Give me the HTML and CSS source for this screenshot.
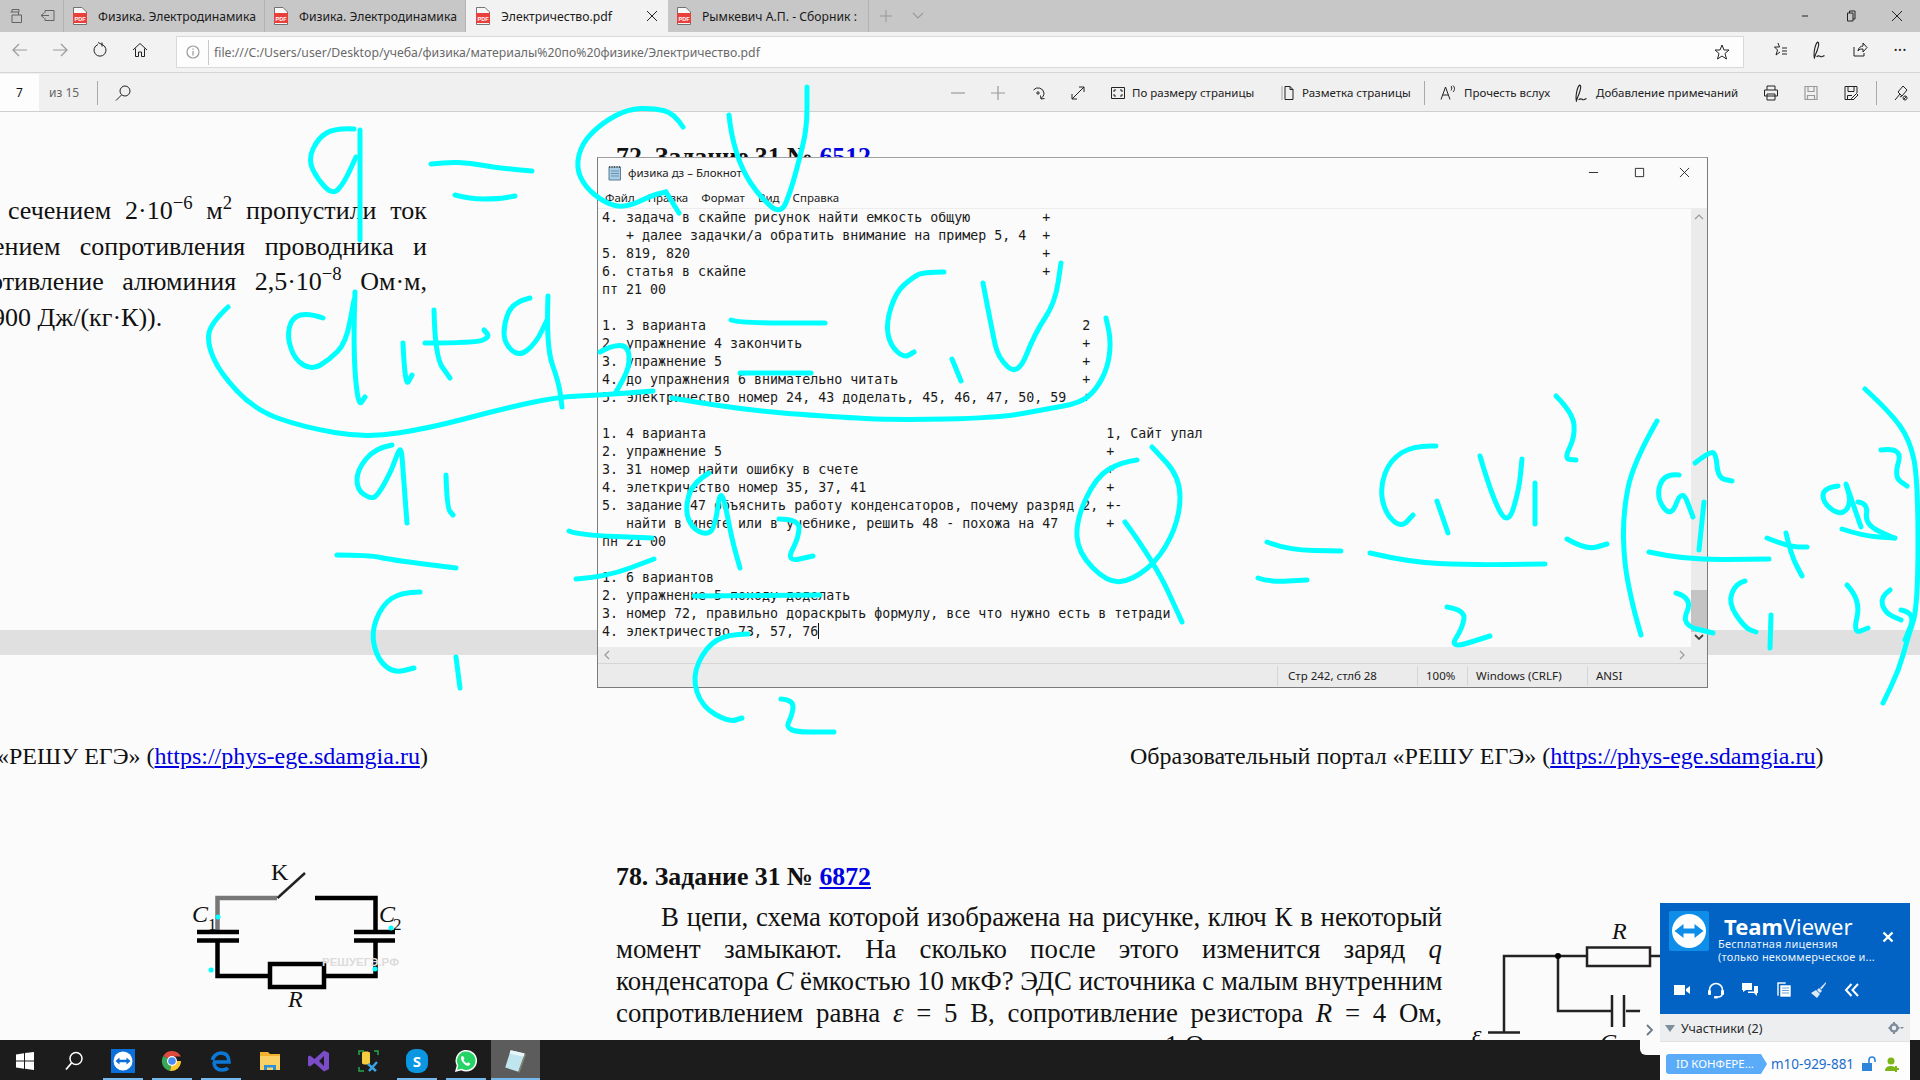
FILE: index.html
```html
<!DOCTYPE html>
<html lang="ru">
<head>
<meta charset="utf-8">
<title>Электричество.pdf</title>
<link rel="stylesheet" href="styles.css">
</head>
<body>
<div class="screen">
  <header class="tabbar">
    <div class="tab-tools">
      <svg class="ic" viewBox="0 0 16 16"><path d="M3 4V1.500h7V4M1.500 4h8v3M3 7h9.500v7.500H3z" class="ln"/></svg>
      <svg class="ic" viewBox="0 0 16 16"><path d="M5 5V2.500h9v10H5V10M1 7.500h8M4 5 1 7.500 4 10" class="ln"/></svg>
    </div>
    <div class="tab"><svg class="pdf" viewBox="0 0 14 18"><path d="M.5.500h8.500l4.500 4.500v12.500H.5z" fill="#f7f7f7" stroke="#555" stroke-width=".8"/><path d="M0 6h14v10H0z" fill="#e8413c"/><text x="7" y="13.500" class="pdf-t">PDF</text></svg><span class="tab-text">Физика. Электродинамика</span></div>
    <div class="tab"><svg class="pdf" viewBox="0 0 14 18"><path d="M.5.500h8.500l4.500 4.500v12.500H.5z" fill="#f7f7f7" stroke="#555" stroke-width=".8"/><path d="M0 6h14v10H0z" fill="#e8413c"/><text x="7" y="13.500" class="pdf-t">PDF</text></svg><span class="tab-text">Физика. Электродинамика</span></div>
    <div class="tab tab-active"><svg class="pdf" viewBox="0 0 14 18"><path d="M.5.500h8.500l4.500 4.500v12.500H.5z" fill="#f7f7f7" stroke="#555" stroke-width=".8"/><path d="M0 6h14v10H0z" fill="#e8413c"/><text x="7" y="13.500" class="pdf-t">PDF</text></svg><span class="tab-text">Электричество.pdf</span><svg class="tab-x" viewBox="0 0 12 12"><path d="M1 1l10 10M11 1 1 11" class="ln"/></svg></div>
    <div class="tab"><svg class="pdf" viewBox="0 0 14 18"><path d="M.5.500h8.500l4.500 4.500v12.500H.5z" fill="#f7f7f7" stroke="#555" stroke-width=".8"/><path d="M0 6h14v10H0z" fill="#e8413c"/><text x="7" y="13.500" class="pdf-t">PDF</text></svg><span class="tab-text">Рымкевич А.П. - Сборник :</span></div>
    <div class="tab-add"><svg class="ic" viewBox="0 0 16 16"><path d="M8 1v14M1 8h14" class="ln-gray"/></svg></div>
    <div class="tab-more"><svg class="ic-s" viewBox="0 0 12 8"><path d="M1 1l5 5 5-5" class="ln-gray"/></svg></div>
    <div class="win-btns">
      <svg class="ic-s" viewBox="0 0 12 12"><path d="M3 6h6" class="ln"/></svg>
      <svg class="ic-s" viewBox="0 0 12 12"><path d="M4.500 3V1h5.500v8H8M2.500 3H8v8H2.500z" class="ln"/></svg>
      <svg class="ic-s" viewBox="0 0 12 12"><path d="M1 1l10 10M11 1 1 11" class="ln"/></svg>
    </div>
  </header>

  <div class="addrbar">
    <div class="cell"><svg class="ic" viewBox="0 0 16 16"><path d="M15 8H1M7 2 1 8l6 6" class="ln-gray"/></svg></div>
    <div class="cell"><svg class="ic" viewBox="0 0 16 16"><path d="M1 8h14M9 2l6 6-6 6" class="ln-gray"/></svg></div>
    <div class="cell"><svg class="ic" viewBox="0 0 16 16"><path d="M6 2.500A6 6 0 1 0 10 2.500M10 .500v4M6 .500l4 2" class="ln"/></svg></div>
    <div class="cell"><svg class="ic" viewBox="0 0 16 16"><path d="M1 8l7-6.500L15 8M3.500 6.500V14.500H6.500V10h3v4.500h3V6.500" class="ln"/></svg></div>
    <div class="urlbox">
      <svg class="ic-info" viewBox="0 0 14 14"><circle cx="7" cy="7" r="6" class="ln-gray"/><path d="M7 6v4.500M7 3.500v1.200" class="ln-gray"/></svg>
      <span class="url">file:///C:/Users/user/Desktop/учеба/физика/материалы%20по%20физике/Электричество.pdf</span>
      <svg class="ic url-star" viewBox="0 0 16 16"><path d="M8 1l2 5h5l-4 3.500 1.500 5.500L8 12l-4.500 3L5 9.500 1 6h5z" class="ln"/></svg>
    </div>
    <div class="cell"><svg class="ic" viewBox="0 0 16 16"><path d="M6 1l1.500 4h-5L5.500 8 4 13l4-3M10 6h5M10 9h5M10 12h5" class="ln"/></svg></div>
    <div class="cell"><svg class="ic ic-pen" viewBox="0 0 16 16"><path d="M6 1C8 1 6 8 4 12L3 15C2 10 4 2 6 1zM5 14c2-2 3 0 4 0s2-1 3-1" class="ln"/></svg></div>
    <div class="cell"><svg class="ic" viewBox="0 0 16 16"><path d="M2 5v9h10v-3M6 9c0-3 3-5 5-5V1l4 4.500L11 10V7c-2 0-4 0-5 2z" class="ln"/></svg></div>
    <div class="cell"><span class="dots">···</span></div>
  </div>

  <div class="pdfbar">
    <div class="pagebox">7</div>
    <div class="pagecount">из 15</div>
    <div class="vsep sep-left"></div>
    <div class="cell cell-search"><svg class="ic" viewBox="0 0 16 16"><circle cx="10" cy="6" r="5" class="ln"/><path d="M6.500 10 1 15.500" class="ln"/></svg></div>
    <div class="bar-right">
      <div class="cell"><svg class="ic" viewBox="0 0 16 16"><path d="M1 8h14" class="ln-gray"/></svg></div>
      <div class="cell"><svg class="ic" viewBox="0 0 16 16"><path d="M8 1v14M1 8h14" class="ln-gray"/></svg></div>
      <div class="cell"><svg class="ic" viewBox="0 0 16 16"><path d="M3.500 5A6 6 0 0 1 14 8c0 2.500-1.500 4.500-3 5.500M10.500 10.500 11 14l3.500-.5" class="ln"/><circle cx="8" cy="8" r="1.200" class="ln"/></svg></div>
      <div class="cell"><svg class="ic" viewBox="0 0 16 16"><path d="M2 14 14 2M9 2h5v5M2 9v5h5" class="ln"/></svg></div>
      <div class="lbl lbl-fit"><svg class="ic" viewBox="0 0 16 16"><path d="M1.500 2.500h13v11h-13zM4 7V5h2M10 5h2v2M12 9v2h-2M6 11H4V9" class="ln"/></svg><span>По размеру страницы</span></div>
      <div class="lbl lbl-layout"><svg class="ic" viewBox="0 0 16 16"><path d="M5 1.500h5l3 3v10H5zM10 1.500v3h3" class="ln"/><path d="M2 1.500v13" class="ln-dot"/></svg><span>Разметка страницы</span></div>
      <div class="vsep sep-mid"></div>
      <div class="lbl lbl-read"><svg class="ic" viewBox="0 0 16 16"><path d="M1 14.500 5.500 2l4.500 12.500M2.800 10h5.400M11 1c1 1 1 3 0 4.500M13 .500c2 2 2 4.500 0 6.500" class="ln"/></svg><span>Прочесть вслух</span></div>
      <div class="lbl lbl-note"><svg class="ic ic-pen" viewBox="0 0 16 16"><path d="M6 1C8 1 6 8 4 12L3 15C2 10 4 2 6 1zM5 14c2-2 3 0 4 0s2-1 3-1" class="ln"/></svg><span>Добавление примечаний</span></div>
      <div class="cell"><svg class="ic" viewBox="0 0 16 16"><path d="M4 5V1h8v4M1.500 5h13v6h-13zM4 9h8v6H4z" class="ln"/></svg></div>
      <div class="cell"><svg class="ic" viewBox="0 0 16 16"><path d="M2 1.500h12v13H2zM5 1.500v5h6v-5M4.500 14.500v-4h7v4" class="ln-gray"/></svg></div>
      <div class="cell"><svg class="ic" viewBox="0 0 16 16"><path d="M9 14.500H2v-13h12V8M5 1.500v5h6v-5M4.500 14.500v-4H9M10 15l5-5-1.500-1.500-5 5z" class="ln"/></svg></div>
      <div class="vsep sep-pin"></div>
      <div class="cell cell-pin"><svg class="ic" viewBox="0 0 16 16"><path d="M10 1 5 7l4 4 5-6zM7 9l-5 6M9 11l-2 1M12 11a2 2 0 1 0 .1 0zM10.500 14.500l3-3" class="ln"/></svg></div>
    </div>
  </div>

  <main class="viewer">
    <section class="page page-one">
      <div class="col-left">
        <div class="j line-a">сечением 2·10<sup>−6</sup> м<sup>2</sup> пропустили ток</div>
        <div class="j line-b">ением сопротивления проводника и</div>
        <div class="j line-c">отивление алюминия 2,5·10<sup>−8</sup> Ом·м,</div>
        <div class="line-d">900 Дж/(кг·К)).</div>
      </div>
      <div class="col-main">
        <h2 class="task">72. Задание 31 № <a href="#">6512</a></h2>
      </div>
    </section>
    <section class="page page-two">
      <div class="footer-row">
        <div class="foot-left">«РЕШУ ЕГЭ» (<a href="#">https://phys-ege.sdamgia.ru</a>)</div>
        <div class="foot-right">Образовательный портал «РЕШУ ЕГЭ» (<a href="#">https://phys-ege.sdamgia.ru</a>)</div>
      </div>
      <div class="task-row">
        <div class="fig-one">
          <svg class="circuit-a" viewBox="190 860 220 160">
            <path d="M217.500 929V897H277" class="wire wire-gray"/>
            <path d="M277.500 897 305 872" class="wire-thin"/>
            <path d="M315 897H375.500V929M217.500 941V975H269M325 975H375.500V941M197 931H239M197 939.500H239M354 931H395M354 939.500H395M270 963H324V986H270z" class="wire"/>
            <text x="271" y="879" class="c-lbl">K</text>
            <text x="192" y="921" class="c-lbl c-it">C</text>
            <text x="208" y="929" class="c-sub">1</text>
            <text x="379" y="921" class="c-lbl c-it">C</text>
            <text x="393" y="929" class="c-sub">2</text>
            <text x="288" y="1006" class="c-lbl c-it">R</text>
            <text x="322" y="965" class="c-mark">РЕШУЕГЭ.РФ</text>
          </svg>
        </div>
        <div class="col-text">
          <h2 class="task">78. Задание 31 № <a href="#">6872</a></h2>
          <div class="j first">В цепи, схема которой изображена на рисунке, ключ К в некоторый</div>
          <div class="j">момент замыкают. На сколько после этого изменится заряд <i>q</i></div>
          <div class="j">конденсатора <i>C</i> ёмкостью 10 мкФ? ЭДС источника с малым внутренним</div>
          <div class="j">сопротивлением равна <i>ε</i> = 5 В, сопротивление резистора <i>R</i> = 4 Ом,</div>
          <div class="cut">1 Ом</div>
        </div>
        <div class="fig-two">
          <svg class="circuit-b" viewBox="1470 921 190 125">
            <path d="M1504 1032V956H1587M1650 956H1662M1558 956V1011H1612M1626 1011H1662" class="wire-m"/>
            <path d="M1587 947.500H1650V966H1587z" class="wire-m"/>
            <path d="M1612 995V1027M1624 995V1027M1488 1032.500H1520" class="wire-m"/>
            <circle cx="1558" cy="956" r="3" class="node"/>
            <text x="1612" y="939" class="c-lbl c-it">R</text>
            <text x="1472" y="1042" class="c-lbl c-it">ε</text>
            <text x="1600" y="1050" class="c-lbl c-it">C</text>
          </svg>
        </div>
      </div>
    </section>
  </main>

  <footer class="taskbar">
    <div class="tb tb-sys"><svg class="ti" viewBox="0 0 24 24"><path d="M3 5.500l8-1.200V11.500H3zM12 4.100 21 3v8.500h-9zM3 12.500h8v7.200l-8-1.200zM12 12.500h9V21l-9-1.200z" fill="#fff"/></svg></div>
    <div class="tb tb-sys"><svg class="ti" viewBox="0 0 24 24"><circle cx="14" cy="9.500" r="6" fill="none" stroke="#fff" stroke-width="1.500"/><path d="M9.500 14 4 20.500" stroke="#fff" stroke-width="1.800" fill="none"/></svg></div>
    <div class="tb run"><svg class="ti" viewBox="0 0 24 24"><rect width="24" height="24" fill="#0a6fd8"/><circle cx="12" cy="12" r="9.500" fill="#fff"/><path d="M4.500 12l4-3.500v2.300h7V8.500l4 3.500-4 3.500v-2.300h-7v2.300z" fill="#0a6fd8"/></svg></div>
    <div class="tb run"><svg class="ti" viewBox="0 0 24 24"><path d="M12 12 3.300 7A10 10 0 0 1 21 7.500H12z" fill="#dd4b3e"/><path d="M12 12 3.300 7A10 10 0 0 0 10 22z" fill="#3aa757"/><path d="M12 12h9a10 10 0 0 1-11 10z" fill="#fdc82f"/><circle cx="12" cy="12" r="5" fill="#fff"/><circle cx="12" cy="12" r="3.800" fill="#4a8af4"/></svg></div>
    <div class="tb run"><svg class="ti" viewBox="0 0 24 24"><path d="M4 13h16c0-6-3-9-8-9S4 8 3.500 11M5 13c0 5 3 8 8 8 3 0 5-1 6-2" fill="none" stroke="#0b78d8" stroke-width="3.600"/></svg></div>
    <div class="tb"><svg class="ti" viewBox="0 0 24 24"><path d="M2 3h8l2 2h10v3H2z" fill="#f2b22d"/><path d="M2 7h20v14H2z" fill="#fad165"/><path d="M6 16h12v5h-3v-2.500H9V21H6z" fill="#2b8fd9"/></svg></div>
    <div class="tb"><svg class="ti" viewBox="0 0 24 24"><path d="M17 1.500 22 4v16l-5 2.500L7.500 14 3 17.500l-2-1v-9l2-1L7.500 10zM17 7l-5 5 5 5z" fill="#7b4cc8" fill-rule="evenodd"/></svg></div>
    <div class="tb"><svg class="ti" viewBox="0 0 24 24"><path d="M3 6v-4h5M18 2h4v4M3 18v4h5" fill="none" stroke="#27a745" stroke-width="1.500"/><path d="M6 4c0-2 8-2 8 0v10c0 2-8 2-8 0z" fill="#f4ce3e"/><path d="M12 15l8 7M21 13l-8 9" stroke="#3aa3e3" stroke-width="2.500"/></svg></div>
    <div class="tb run"><span class="skype">S</span></div>
    <div class="tb run"><svg class="ti" viewBox="0 0 24 24"><path d="M2 22l1.500-5.500A10 10 0 1 1 7.500 20.500z" fill="#25d366" stroke="#fff" stroke-width="1.500"/><path d="M8 7c-1.500 1-1.500 3 .5 6s5 4.500 6.500 3.500 1.500-2 .5-2.500l-1.500-.8-1 1c-1.500-.5-3-2-3.500-3.500l1-1-.8-1.800C9.200 7 8.500 6.700 8 7z" fill="#fff"/></svg></div>
    <div class="tb run tb-active"><svg class="ti ti-note" viewBox="0 0 24 24"><path d="M8 2l13 3-6 17-12-4z" fill="#bfe6ee"/><path d="M8 2l13 3-1 3-13-3z" fill="#e8f6fa"/><path d="M15 22l6-17 1 1-6 17z" fill="#8a8a7a"/></svg></div>
  </footer>

  <div class="notepad">
    <div class="np-title">
      <svg class="np-icon" viewBox="0 0 16 16"><path d="M2 2h11.500v13H2z" fill="#a9cde6" stroke="#5b7f96"/><path d="M2.500 1v2M5 1v2M7.500 1v2M10 1v2M12.500 1v2" stroke="#555"/><path d="M4 6h8M4 8.500h8M4 11h8" stroke="#6d93ad"/></svg>
      <span class="np-name">физика дз – Блокнот</span>
      <svg class="np-b" viewBox="0 0 12 12"><path d="M1 6h10" class="ln"/></svg>
      <svg class="np-b" viewBox="0 0 12 12"><path d="M1.500 1.500h9v9h-9z" class="ln"/></svg>
      <svg class="np-b" viewBox="0 0 12 12"><path d="M1 1l10 10M11 1 1 11" class="ln"/></svg>
    </div>
    <nav class="np-menu"><span>Файл</span><span>Правка</span><span>Формат</span><span>Вид</span><span>Справка</span></nav>
    <div class="np-body">
      <pre class="np-text">4. задача в скайпе рисунок найти емкость общую         +
   + далее задачки/а обратить внимание на пример 5, 4  +
5. 819, 820                                            +
6. статья в скайпе                                     +
пт 21 00

1. 3 варианта                                               2
2. упражнение 4 закончить                                   +
3. упражнение 5                                             +
4. до упражнения 6 внимательно читать                       +
5. электричество номер 24, 43 доделать, 45, 46, 47, 50, 59  +

1. 4 варианта                                                  1, Сайт упал
2. упражнение 5                                                +
3. 31 номер найти ошибку в счете                               +
4. элеткричество номер 35, 37, 41                              +
5. задание 47 объяснить работу конденсаторов, почему разряд 2, +-
   найти в инете или в учебнике, решить 48 - похожа на 47      +
пн 21 00

1. 6 вариантов
2. упражнение 5 походу доделать
3. номер 72, правильно дораскрыть формулу, все что нужно есть в тетради
4. электричество 73, 57, 76<span class="caret"></span></pre>
      <div class="np-vs">
        <svg class="np-arrow" viewBox="0 0 10 6"><path d="M1 5l4-4 4 4" class="ln-gray"/></svg>
        <div class="np-thumb"></div>
        <svg class="np-arrow" viewBox="0 0 10 6"><path d="M1 1l4 4 4-4" class="ln-dark"/></svg>
      </div>
    </div>
    <div class="np-hs">
      <svg class="np-arrow-h" viewBox="0 0 6 10"><path d="M5 1 1 5l4 4" class="ln-gray"/></svg>
      <svg class="np-arrow-h" viewBox="0 0 6 10"><path d="M1 1l4 4-4 4" class="ln-gray"/></svg>
    </div>
    <div class="np-status">
      <span class="st st-pos">Стр 242, стлб 28</span>
      <span class="st st-zoom">100%</span>
      <span class="st st-eol">Windows (CRLF)</span>
      <span class="st st-enc">ANSI</span>
    </div>
  </div>

  <aside class="tv">
    <div class="tv-handle"><svg class="tv-chev" viewBox="0 0 8 12"><path d="M1 1l5 5-5 5" class="ln-slate"/></svg></div>
    <div class="tv-panel">
      <div class="tv-head">
        <div class="tv-top">
          <svg class="tv-logo" viewBox="0 0 40 40"><rect width="40" height="40" rx="2" fill="#0e8ee9"/><circle cx="20" cy="20" r="17" fill="#fff"/><path d="M5.500 20l9-7v4.500h11V13l9 7-9 7v-4.500h-11V27z" fill="#0e8ee9"/></svg>
          <div class="tv-brand">
            <div class="tv-name"><b>Team</b>Viewer</div>
            <div class="tv-sub">Бесплатная лицензия</div>
            <div class="tv-sub">(только некоммерческое и...</div>
          </div>
          <svg class="tv-close" viewBox="0 0 12 12"><path d="M1.500 1.500l9 9M10.500 1.500l-9 9" stroke="#fff" stroke-width="2.400" fill="none"/></svg>
        </div>
        <div class="tv-tools">
          <svg class="tv-i" viewBox="0 0 18 18"><path d="M1 4h11v10H1zM13 8l4-3v8l-4-3z" fill="#fff"/></svg>
          <svg class="tv-i" viewBox="0 0 18 18"><path d="M2.500 9a6.500 6.500 0 0 1 13 0v3c0 3-2 4-5 4" fill="none" stroke="#fff" stroke-width="1.600"/><rect x="1" y="9" width="3" height="5" rx="1" fill="#fff"/><rect x="14" y="9" width="3" height="5" rx="1" fill="#fff"/><rect x="7" y="15" width="4" height="2.500" rx="1" fill="#fff"/></svg>
          <svg class="tv-i" viewBox="0 0 18 18"><path d="M1 2h10v7H5L2 11V9H1zM13 5h4v7h-1v3l-3-3H7v-1.500h6z" fill="#fff"/></svg>
          <svg class="tv-i" viewBox="0 0 18 18"><path d="M2 1h9v2H4v12H2zM5 4h11v12H5zM7 7h7M7 9.500h7M7 12h7" fill="#fff" stroke="#0263c4" stroke-width=".6"/></svg>
          <svg class="tv-i" viewBox="0 0 18 18"><path d="M17 1l-6 6 1.500 1.500L17 2.500zM10 7l3 3-2 2-3-3zM7 9l4 4-3 4-6-5z" fill="#dce9f7"/></svg>
          <svg class="tv-i" viewBox="0 0 18 18"><path d="M8.500 3 3 9l5.500 6M15 3 9.500 9l5.500 6" fill="none" stroke="#fff" stroke-width="2"/></svg>
        </div>
      </div>
      <div class="tv-parts">
        <span class="tv-tri"></span><span class="tv-plabel">Участники (2)</span>
        <svg class="tv-gear" viewBox="0 0 16 14"><circle cx="6" cy="7" r="3.500" fill="none" stroke="#7d8d9c" stroke-width="2.500"/><path d="M6 1v2M6 11v2M.500 7h2M9.500 7h2" stroke="#7d8d9c" stroke-width="2"/><path d="M12 6h4l-2 2z" fill="#7d8d9c"/></svg>
      </div>
      <div class="tv-id">
        <span class="tv-pill">ID КОНФЕРЕ...</span>
        <span class="tv-num">m10-929-881</span>
        <svg class="tv-lock" viewBox="0 0 16 16"><path d="M1 7h10v8H1z" fill="#2f83d9"/><path d="M8 7V4a3 3 0 0 1 6 0v2" fill="none" stroke="#2f83d9" stroke-width="1.600"/></svg>
        <svg class="tv-user" viewBox="0 0 16 16"><circle cx="7" cy="5" r="3.500" fill="#7cb518"/><path d="M1 15c0-4 3-5 6-5s4 1 4 2v3z" fill="#7cb518"/><path d="M12 10v6M9 13h6" stroke="#7cb518" stroke-width="2"/></svg>
      </div>
    </div>
  </aside>

  <svg class="ink" id="ink" viewBox="0 0 1920 1080"></svg>
</div>
<script src="ink.js"></script>
</body>
</html>
```

FILE: styles.css
```css
* { box-sizing: border-box; }
html, body { margin: 0; padding: 0; height: 100%; overflow: hidden; }
body { font-family: "Noto Sans", "Open Sans", sans-serif; font-size: 12px; color: #222; }
.screen { position: relative; width: 1920px; height: 1080px; display: flex; flex-direction: column; overflow: hidden; background: #fbfbfb; }

.ln { fill: none; stroke: #222; stroke-width: 1; }
.ln-gray { fill: none; stroke: #9a9a9a; stroke-width: 1.2; }
.ln-dark { fill: none; stroke: #444; stroke-width: 1.8; }
.ln-slate { fill: none; stroke: #6c7a89; stroke-width: 1.8; }
.ln-dot { fill: none; stroke: #555; stroke-width: 1; stroke-dasharray: 1 1; }
.ic { width: 16px; height: 16px; flex: none; }
.ic-s { width: 12px; height: 12px; flex: none; }
.ic-pen { width: 18px; height: 18px; }

/* tabs */
.tabbar { height: 32px; flex: none; display: flex; background: #c7c7c7; }
.tab-tools { width: 64px; display: flex; align-items: center; gap: 15px; padding-left: 9px; border-right: 1px solid #b3b3b3; }
.tab-tools .ic { width: 16px; height: 16px; opacity: .6; }
.tab { width: 201px; display: flex; align-items: center; padding-left: 9px; border-right: 1px solid #b3b3b3; background: #c7c7c7; font-size: 12.200px; color: #1a1a1a; overflow: hidden; white-space: nowrap; }
.tab-active { background: #f2f2f2; width: 202px; border-right: 0; padding-left: 10px; }
.pdf { width: 14px; height: 18px; flex: none; margin-right: 11px; }
.pdf-t { font-family: "Liberation Sans", sans-serif; font-size: 5.500px; font-weight: bold; fill: #fff; text-anchor: middle; }
.tab-text { flex: 1; overflow: hidden; }
.tab-x { width: 12px; height: 12px; margin-right: 10px; flex: none; }
.tab-add { width: 34px; display: flex; align-items: center; justify-content: center; }
.tab-add .ic { width: 14px; height: 14px; }
.tab-more { width: 30px; display: flex; align-items: center; justify-content: center; }
.win-btns { margin-left: auto; width: 138px; display: flex; align-items: center; justify-content: space-between; padding: 0 17px; }

/* address */
.cell { width: 40px; flex: none; display: flex; align-items: center; justify-content: center; }
.addrbar { height: 41px; flex: none; display: flex; background: #f2f2f2; border-bottom: 1px solid #d4d4d4; padding-bottom: 4px; }
.urlbox { flex: 1; margin: 4px 16px 0; display: flex; align-items: center; background: #fdfdfd; border: 1px solid #d9d9d9; padding-left: 9px; }
.ic-info { width: 14px; height: 14px; margin-right: 8px; flex: none; }
.url { border-left: 1px solid #c8c8c8; padding: 1px 0 0 5px; color: #6a6a6a; font-size: 12.280px; line-height: 24px; white-space: nowrap; }
.url-star { margin-left: auto; margin-right: 13px; }
.dots { font-size: 16px; color: #222; line-height: 16px; }

/* pdf bar */
.pdfbar { height: 39px; flex: none; display: flex; background: #f0f0f0; border-bottom: 1px solid #cfcfcf; font-size: 12px; padding-top: 1px; }
.pagebox { width: 39px; background: #fdfdfd; display: flex; align-items: center; justify-content: center; color: #111; }
.pagecount { width: 58px; padding-left: 10px; display: flex; align-items: center; color: #666; }
.vsep { width: 1px; height: 24px; align-self: center; background: #a9a9a9; flex: none; }
.cell-search { margin-left: 5px; }
.bar-right { margin-left: auto; display: flex; width: 982px; }
.lbl { display: flex; align-items: center; flex: none; gap: 6px; font-size: 11.500px; white-space: nowrap; color: #222; }
.lbl-fit { width: 176px; padding-left: 12px; }
.lbl-layout { width: 142px; padding-left: 6px; }
.sep-mid { margin: 0 9px 0 8px; }
.lbl-read { width: 132px; padding-left: 6px; gap: 8px; }
.lbl-note { width: 185px; padding-left: 7px; gap: 5px; }
.sep-pin { margin: 0 4px 0 5px; }
.cell-pin { width: 39px; }

/* document */
.viewer { flex: 1; min-height: 0; background: #e0e0e0; overflow: hidden; font-family: "Liberation Serif", serif; font-size: 26px; color: #111; }
.page { background: #fbfbfb; }
.page a { color: #0000e0; }
.page sup { font-size: 72%; line-height: 0; }
.page-one { height: 518px; display: flex; margin-bottom: 25px; }
.col-left { width: 427px; margin-right: 189px; padding: 81px 0 0 0; flex: none; }
.col-left > div { line-height: 35.500px; white-space: nowrap; }
.j { text-align: justify; text-align-last: justify; white-space: nowrap; }
.line-a { margin-left: 8px; }
.line-b { margin-left: -7px; }
.line-c { margin-left: -10px; }
.line-d { margin-left: -8px; }
.col-main { flex: 1; padding-top: 29px; }
.task { margin: 0; font-size: 25.800px; font-weight: bold; line-height: 32px; }
.page-two { height: 385px; overflow: hidden; padding-top: 85px; }
.footer-row { display: flex; height: 32px; line-height: 32px; font-size: 24px; white-space: nowrap; }
.foot-left { width: 427px; flex: none; margin-left: -3px; }
.foot-right { margin-left: 706px; }
.task-row { display: flex; margin-top: 89px; align-items: flex-start; }
.fig-one { width: 616px; flex: none; padding-left: 190px; }
.circuit-a { width: 220px; height: 160px; display: block; margin-left: 0; }
.col-text { width: 826px; flex: none; line-height: 32px; font-size: 26.800px; }
.col-text .task { margin-bottom: 8px; }
.col-text .j { line-height: 32px; }
.first { text-indent: 45px; }
.cut { margin-left: 549px; }
.fig-two { padding: 60px 0 0 28px; }
.circuit-b { width: 190px; height: 125px; display: block; }
.wire { fill: none; stroke: #000; stroke-width: 4.500; }
.wire-gray { stroke: #777; }
.wire-thin { fill: none; stroke: #222; stroke-width: 2.500; }
.wire-m { fill: none; stroke: #222; stroke-width: 2.500; }
.node { fill: #000; }
.c-lbl { font-family: "Liberation Serif", serif; font-size: 24px; fill: #111; }
.c-it { font-style: italic; }
.c-sub { font-family: "Liberation Serif", serif; font-size: 17px; fill: #111; }
.c-mark { font-family: "Liberation Sans", sans-serif; font-size: 11.500px; font-weight: bold; fill: #dcdcdc; }

/* taskbar */
.taskbar { height: 40px; flex: none; display: flex; background: #1c1c1c; position: relative; z-index: 3; }
.tb { width: 49px; flex: none; display: flex; align-items: center; justify-content: center; padding-top: 1px; }
.tb-sys { width: 49.250px; }
.tb.run { background-image: linear-gradient(#76b9ed, #76b9ed); background-repeat: no-repeat; background-size: 40px 2px; background-position: center bottom; }
.tb-active { background-color: #5c5c5c; background-size: 100% 2px !important; }
.ti { width: 24px; height: 24px; }
.ti-note { width: 26px; height: 26px; }
.skype { width: 22px; height: 24px; border-radius: 9px; background: #0a96e0; color: #fff; font: bold 15px/24px "Noto Sans", sans-serif; text-align: center; }

/* notepad */
.notepad { position: absolute; left: 597px; top: 157px; width: 1111px; height: 531px; z-index: 2; background: #fbfbfb; border: 1px solid #7c7c7c; border-top-color: #a0a0a0; display: flex; flex-direction: column; font-size: 11.500px; color: #222; }
.np-title { height: 29px; flex: none; display: flex; align-items: center; padding-left: 9px; }
.np-icon { width: 16px; height: 16px; margin-right: 5px; }
.np-name { flex: 1; }
.np-b { width: 11px; height: 11px; margin-right: 34.500px; }
.np-b:last-child { margin-right: 17px; }
.np-menu { height: 22px; flex: none; display: flex; gap: 13px; padding: 0 0 0 7px; align-items: center; border-bottom: 1px solid #ededed; }
.np-body { flex: 1; min-height: 0; display: flex; }
.np-text { flex: 1; margin: 0; padding: 0 0 0 4px; font-family: "DejaVu Sans Mono", monospace; font-size: 13.300px; line-height: 18px; color: #1a1a1a; overflow: hidden; }
.caret { display: inline-block; width: 1px; height: 16px; background: #111; vertical-align: -3px; }
.np-vs { width: 16px; flex: none; background: #ebebeb; display: flex; flex-direction: column; align-items: center; padding: 5px 0 2px; position: relative; }
.np-arrow { width: 10px; height: 6px; }
.np-arrow:last-child { margin-top: auto; margin-bottom: 5px; }
.np-thumb { width: 16px; height: 42px; background: #c4c4c4; margin-top: 370px; }
.np-hs { height: 16px; flex: none; background: #ebebeb; display: flex; justify-content: space-between; align-items: center; padding: 0 22px 0 6px; }
.np-arrow-h { width: 6px; height: 10px; }
.np-status { height: 24px; flex: none; background: #ebebeb; border-top: 1px solid #d5d5d5; display: flex; align-items: center; padding-top: 1px; }
.st { height: 20px; line-height: 20px; padding-left: 10px; border-left: 1px solid #d5d5d5; white-space: nowrap; }
.st-pos { margin-left: 679px; width: 140px; }
.st-zoom { width: 50px; padding-left: 8px; }
.st-eol { width: 120px; padding-left: 8px; }
.st-enc { width: 100px; padding-left: 8px; }

/* teamviewer */
.tv { position: absolute; left: 1640px; top: 903px; width: 270px; height: 177px; z-index: 4; display: flex; }
.tv-handle { width: 20px; height: 50px; margin-top: 102px; background: #fbfbfb; border-radius: 6px 0 0 6px; display: flex; align-items: center; justify-content: center; flex: none; }
.tv-chev { width: 8px; height: 12px; }
.tv-panel { width: 250px; flex: none; display: flex; flex-direction: column; }
.tv-head { height: 111px; background: #0263c4; flex: none; padding: 8px 0 0 9px; color: #fff; }
.tv-top { display: flex; height: 58px; align-items: flex-start; }
.tv-logo { width: 40px; height: 40px; flex: none; }
.tv-brand { margin-left: 9px; flex: 1; }
.tv-name { font-size: 22px; font-weight: 400; line-height: 24px; padding-left: 6px; margin-top: 3px; }
.tv-name b { font-weight: 700; }
.tv-sub { font-size: 11px; line-height: 12.500px; letter-spacing: .2px; white-space: nowrap; opacity: .92; }
.tv-close { width: 12px; height: 12px; margin: 20px 16px 0 0; flex: none; }
.tv-tools { display: flex; gap: 16px; padding: 12px 0 0 4px; }
.tv-i { width: 18px; height: 18px; flex: none; }
.tv-parts { height: 28px; flex: none; background: #eceef0; display: flex; align-items: center; padding: 1px 0 0 5px; border-bottom: 1px solid #dfe1e3; font-size: 12.500px; color: #2a2a2a; }
.tv-tri { width: 0; height: 0; border: 5px solid transparent; border-top: 7px solid #7d8d9c; border-bottom: 0; margin-right: 6px; }
.tv-gear { width: 16px; height: 14px; margin: 0 6px 0 auto; }
.tv-plabel { flex: none; }
.tv-id { flex: 1; background: #fdfdfd; display: flex; align-items: flex-start; padding: 12px 0 0 6px; }
.tv-pill { width: 101px; height: 20px; background: #5aabf8; color: #fff; font-size: 11.500px; line-height: 20px; padding-left: 10px; white-space: nowrap; clip-path: polygon(0 0, 94% 0, 100% 50%, 94% 100%, 0 100%); border-radius: 3px 0 0 3px; }
.tv-num { margin-left: 4px; font-size: 13.500px; line-height: 20px; color: #1a6dd0; white-space: nowrap; }
.tv-lock { width: 16px; height: 16px; margin: 2px 0 0 7px; flex: none; }
.tv-user { width: 16px; height: 16px; margin: 2px 0 0 7px; flex: none; }

/* ink */
.ink { position: absolute; left: 0; top: 0; width: 1920px; height: 1080px; z-index: 5; pointer-events: none; fill: none; stroke: #00ffff; stroke-width: 5; stroke-linecap: round; stroke-linejoin: round; }
```

FILE: ink.js
```js
var STROKES = [
  [354,129,335,128,318,138,308,160,318,180,333,195,344,183,356,157],
  [360,130,360,240],
  [431,164,447,162,470,163,498,168,532,171],
  [455,195,470,199,498,199,515,196],
  [683,127,674,113,653,108,628,109,602,123,582,143,576,167,585,187,605,203,625,208,653,195,666,192],
  [666,192,679,213],
  [729,115,731,135,742,170,760,197,781,215,791,190,800,157,807,127,807,87],
  [228,307,211,323,207,343,220,373,255,410,303,427,366,438,430,428,498,410,556,397,602,395,653,391],
  [600,352,610,346,628,345,630,367,616,392],
  [672,398,741,410,835,417,896,420,998,418,1047,409,1080,403,1096,390,1108,367,1111,340,1106,318],
  [323,318,309,313,292,317,287,337,295,360,312,370,329,360,346,343,354,300],
  [355,292,353,347,358,407,365,397],
  [403,343,405,388,412,375],
  [434,310,435,357,450,378],
  [425,343,476,343,490,337,484,330],
  [530,298,513,302,504,323,504,343,519,357,536,343,547,320],
  [548,296,546,347,559,383,562,407],
  [731,320,740,323,825,323],
  [740,373,811,373],
  [944,272,923,272,912,278,896,292,886,323,890,345,904,358,914,352],
  [952,359,961,381],
  [983,283,992,330,998,358,1018,376,1035,333,1055,303,1061,263],
  [392,445,375,448,357,470,357,490,371,499,378,495,392,470,401,443,403,470,407,523],
  [446,475,447,508,453,515],
  [337,555,369,555,392,560,456,568],
  [420,592,401,592,382,605,371,633,378,660,394,673,414,668],
  [456,657,460,688],
  [569,531,579,535,652,538],
  [576,579,606,577,654,559],
  [709,473,692,483,685,510,692,528,706,535,715,528,721,483,732,540,740,568],
  [779,519,799,519,799,537,786,562,813,556],
  [694,596,820,595],
  [748,634,727,634,706,647,692,677,702,707,729,722,742,718],
  [781,699,793,700,793,713,784,732,834,732],
  [1137,460,1121,462,1096,477,1076,520,1078,553,1108,583,1133,580,1161,557,1180,517,1180,477,1152,447],
  [1125,522,1155,563,1182,622],
  [1267,542,1287,550,1341,551],
  [1258,578,1269,582,1307,580],
  [1436,446,1414,445,1390,460,1380,487,1385,513,1401,528,1413,515],
  [1437,501,1448,533],
  [1480,456,1492,497,1508,526,1519,490,1522,459],
  [1535,483,1535,524],
  [1556,396,1573,413,1575,437,1564,459,1576,460],
  [1370,553,1408,562,1470,565,1545,564],
  [1447,607,1465,610,1463,627,1449,649,1490,636],
  [1567,539,1586,550,1607,544],
  [1657,421,1633,463,1623,513,1624,563,1633,607,1641,635],
  [1679,475,1664,473,1656,497,1671,518,1682,488,1693,517],
  [1704,502,1699,550],
  [1695,463,1709,452,1716,453,1718,478,1732,481],
  [1649,552,1684,560,1769,559],
  [1676,593,1693,598,1681,625,1713,633],
  [1767,538,1789,547,1807,547],
  [1786,533,1791,555,1802,576],
  [1745,581,1736,583,1728,603,1745,628,1756,632],
  [1771,615,1770,648],
  [1838,486,1823,488,1823,503,1841,516,1852,503,1843,475,1861,527],
  [1858,502,1868,503,1865,525,1894,538],
  [1842,529,1863,536,1895,538],
  [1881,450,1903,447,1894,477,1907,486],
  [1865,389,1890,412,1910,440,1918,480,1918,607,1908,637,1899,670,1883,703],
  [1847,585,1861,600,1853,634,1868,628],
  [1890,590,1880,597,1885,613,1901,620],
  [1901,610,1916,613,1905,640],
  [218,917,218.1,917],[211,970,211.1,970],[375,969,375.1,969],[391,928,391.1,928]
];
var ink = document.getElementById('ink');
STROKES.forEach(function (p) {
  var d = 'M' + p[0] + ' ' + p[1];
  for (var i = 2; i < p.length - 2; i += 2) {
    d += 'Q' + p[i] + ' ' + p[i + 1] + ' ' + (p[i] + p[i + 2]) / 2 + ' ' + (p[i + 1] + p[i + 3]) / 2;
  }
  d += 'L' + p[p.length - 2] + ' ' + p[p.length - 1];
  var el = document.createElementNS('http://www.w3.org/2000/svg', 'path');
  el.setAttribute('d', d);
  ink.appendChild(el);
});
```
